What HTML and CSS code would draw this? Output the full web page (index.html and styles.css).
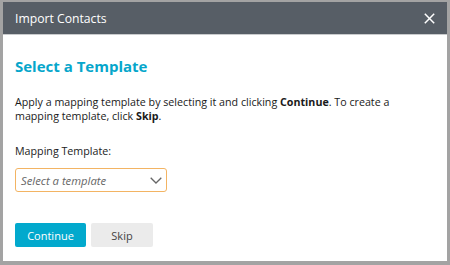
FILE: index.html
```html
<!DOCTYPE html>
<html>
<head>
<meta charset="utf-8">
<link rel="stylesheet" href="styles.css">
</head>
<body>
<div class="dialog">
  <div class="header">
    <span class="header-title">Import Contacts</span>
    <svg class="close" width="11" height="11" viewBox="0 0 11 11"><path d="M0.8 0.8L10.2 10.2M10.2 0.8L0.8 10.2" stroke="#fff" stroke-width="1.5" fill="none"/></svg>
  </div>
  <div class="body">
    <h1 class="title">Select a Template</h1>
    <p class="desc">Apply a mapping template by selecting it and clicking <b>Continue</b>. To create a mapping template, click <b>Skip</b>.</p>
    <div class="label">Mapping Template:</div>
    <div class="select">
      <span class="placeholder">Select a template</span>
      <svg class="chev" width="12" height="7" viewBox="0 0 12 7"><path d="M0.7 0.7L6 6L11.3 0.7" stroke="#666" stroke-width="1.3" fill="none"/></svg>
    </div>
    <div class="actions">
      <button class="btn primary">Continue</button>
      <button class="btn secondary">Skip</button>
    </div>
  </div>
</div>
</body>
</html>
```
FILE: styles.css
```css
html, body { margin: 0; padding: 0; }
body {
  background: #a3a3a3;
  width: 450px;
  height: 265px;
  padding: 2px 3px 4px 3px;
  box-sizing: border-box;
  font-family: "Open Sans", sans-serif;
}
.dialog {
  background: #fff;
  height: 100%;
  display: flex;
  flex-direction: column;
}
.header {
  background: #575e66;
  height: 32px;
  display: flex;
  align-items: center;
  justify-content: space-between;
  padding: 0 12px 0 12px;
  border-bottom: 1px solid #c9cbcd;
}
.header-title {
  color: #fff;
  font-size: 12.2px;
}
.close { display: block; }
.body {
  padding: 0 12px;
}
.title {
  margin: 19px 0 0 0;
  color: #06a6cb;
  font-size: 15px;
  font-weight: 700;
  line-height: 24px;
}
.desc {
  margin: 17px 0 0 0;
  font-size: 10.7px;
  line-height: 14px;
  color: #1a1a1a;
}
.desc b { font-weight: 700; }
.label {
  margin-top: 20px;
  font-size: 10.7px;
  line-height: 16px;
  color: #222;
}
.select {
  margin-top: 9px;
  width: 152px;
  height: 24px;
  box-sizing: border-box;
  border: 1px solid #f3b463;
  border-radius: 3px;
  display: flex;
  align-items: center;
  justify-content: space-between;
  padding: 0 4px 0 5px;
}
.placeholder {
  font-style: italic;
  font-size: 11.3px;
  color: #666;
}
.chev { display: block; }
.actions {
  margin-top: 31px;
  display: flex;
  gap: 5px;
}
.btn {
  height: 24px;
  border: none;
  border-radius: 2px;
  font-family: "Open Sans", sans-serif;
  font-size: 11px;
  padding: 0;
}
.primary {
  width: 71px;
  background: #02a9cd;
  color: #fff;
}
.secondary {
  width: 62px;
  background: #ebebeb;
  color: #444;
}
```
